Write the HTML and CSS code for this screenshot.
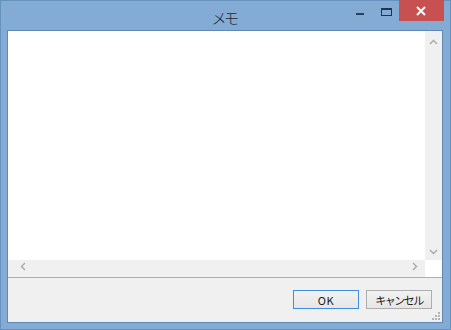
FILE: index.html
```html
<!DOCTYPE html>
<html lang="ja">
<head>
  <meta charset="UTF-8" />
  <title>メモ</title>
  <link rel="stylesheet" href="styles.css">
</head>
<body>
  <div class="window">
    <div class="titlebar">
      <div></div>
      <div class="title">メモ</div>
      <div class="controls">
        <div class="ctl ctl-min">
          <svg width="26" height="20" viewBox="0 0 26 20"><rect x="10" y="13" width="8" height="2" fill="#2b3f57"/></svg>
        </div>
        <div class="ctl ctl-max">
          <svg width="27" height="20" viewBox="0 0 27 20"><rect x="9.5" y="8.5" width="10" height="7" fill="none" stroke="#1f3550" stroke-width="1"/><rect x="9" y="8" width="11" height="2" fill="#1f3550"/></svg>
        </div>
        <div class="ctl ctl-close">
          <svg width="45" height="21" viewBox="0 0 45 21"><path d="M18 7 L26 15 M26 7 L18 15" stroke="#fff" stroke-width="2" fill="none"/></svg>
        </div>
      </div>
    </div>

    <div class="client">
      <div class="editor">
        <div class="editor-main">
          <div class="text"></div>
          <div class="vscroll">
            <svg width="17" height="17" viewBox="0 0 17 17"><path d="M5 12 L8.5 8.5 L12 12" stroke="#a8a8a8" stroke-width="1.4" fill="none"/></svg>
            <svg width="17" height="17" viewBox="0 0 17 17"><path d="M5 7 L8.5 10.5 L12 7" stroke="#a8a8a8" stroke-width="1.4" fill="none"/></svg>
          </div>
        </div>
        <div class="hscroll-row">
          <div class="hscroll">
            <svg width="17" height="17" viewBox="0 0 17 17"><path d="M11 3 L7.5 6.5 L11 10" stroke="#a8a8a8" stroke-width="1.4" fill="none"/></svg>
            <svg width="17" height="17" viewBox="0 0 17 17"><path d="M6 3 L9.5 6.5 L6 10" stroke="#a8a8a8" stroke-width="1.4" fill="none"/></svg>
          </div>
          <div class="corner"></div>
        </div>
      </div>

      <div class="panel">
        <button class="btn btn-default">OK</button>
        <button class="btn">キャンセル</button>
        <svg class="grip" width="9" height="9" viewBox="0 0 9 9">
          <rect x="6" y="0" width="2" height="2" fill="#b4b4b4"/>
          <rect x="3" y="3" width="2" height="2" fill="#b4b4b4"/>
          <rect x="6" y="3" width="2" height="2" fill="#b4b4b4"/>
          <rect x="0" y="6" width="2" height="2" fill="#b4b4b4"/>
          <rect x="3" y="6" width="2" height="2" fill="#b4b4b4"/>
          <rect x="6" y="6" width="2" height="2" fill="#b4b4b4"/>
        </svg>
      </div>
    </div>
  </div>
</body>
</html>
```

FILE: styles.css
```css
* {
  box-sizing: border-box;
}
body {
  margin: 0;
  font-family: "Noto Sans CJK JP", "Noto Sans", sans-serif;
  background: #fff;
}
.window {
  width: 451px;
  height: 330px;
  display: flex;
  flex-direction: column;
  background: #83abd4;
  border: 1px solid #6791bf;
  padding: 0 7px 6px 6px;
}

/* Title bar */
.titlebar {
  height: 29px;
  display: grid;
  grid-template-columns: 1fr auto 1fr;
  align-items: start;
}
.title {
  font-size: 15px;
  font-weight: 300;
  letter-spacing: -2.5px;
  color: #1d2630;
  line-height: 18px;
  padding-top: 8px;
  padding-right: 2px;
}
.controls {
  justify-self: end;
  display: flex;
  margin-top: -1px;
  margin-right: -1px;
}
.ctl {
  height: 21px;
  display: flex;
}
.ctl-min { width: 26px; }
.ctl-max { width: 27px; }
.ctl-close {
  width: 45px;
  background: #c75150;
}

/* Client area */
.client {
  flex: 1;
  display: flex;
  flex-direction: column;
  border: 1px solid #5f88b4;
  background: #f0f0f0;
}
.editor {
  height: 247px;
  display: flex;
  flex-direction: column;
  background: #fff;
  border-bottom: 1px solid #8ab6e4;
}
.editor-main {
  flex: 1;
  display: flex;
}
.text {
  flex: 1;
}
.vscroll {
  width: 17px;
  background: #f0f0f0;
  display: flex;
  flex-direction: column;
  justify-content: space-between;
  padding: 1px 0 0;
}
.hscroll-row {
  height: 17px;
  display: flex;
}
.hscroll {
  flex: 1;
  background: #f0f0f0;
  display: flex;
  justify-content: space-between;
  padding: 0 1px 0 6px;
}
.corner {
  width: 17px;
  background: #fff;
}

/* Button panel */
.panel {
  position: relative;
  flex: 1;
  display: flex;
  justify-content: flex-end;
  align-items: flex-start;
  gap: 7px;
  padding: 12px 10px 0 0;
}
.btn {
  width: 66px;
  height: 19px;
  padding: 0;
  font-family: "Noto Sans CJK JP", "Noto Sans", sans-serif;
  font-size: 11px;
  line-height: 16px;
  color: #1a1a1a;
  background: linear-gradient(#f2f2f2, #e6e6e6);
  border: 1px solid #adadad;
  border-radius: 0;
}
.btn-default {
  border-color: #3c8ee0;
  letter-spacing: 0.5px;
}
.btn:not(.btn-default) {
  letter-spacing: -1.5px;
}
.grip {
  position: absolute;
  right: 1px;
  bottom: 1px;
}
```
